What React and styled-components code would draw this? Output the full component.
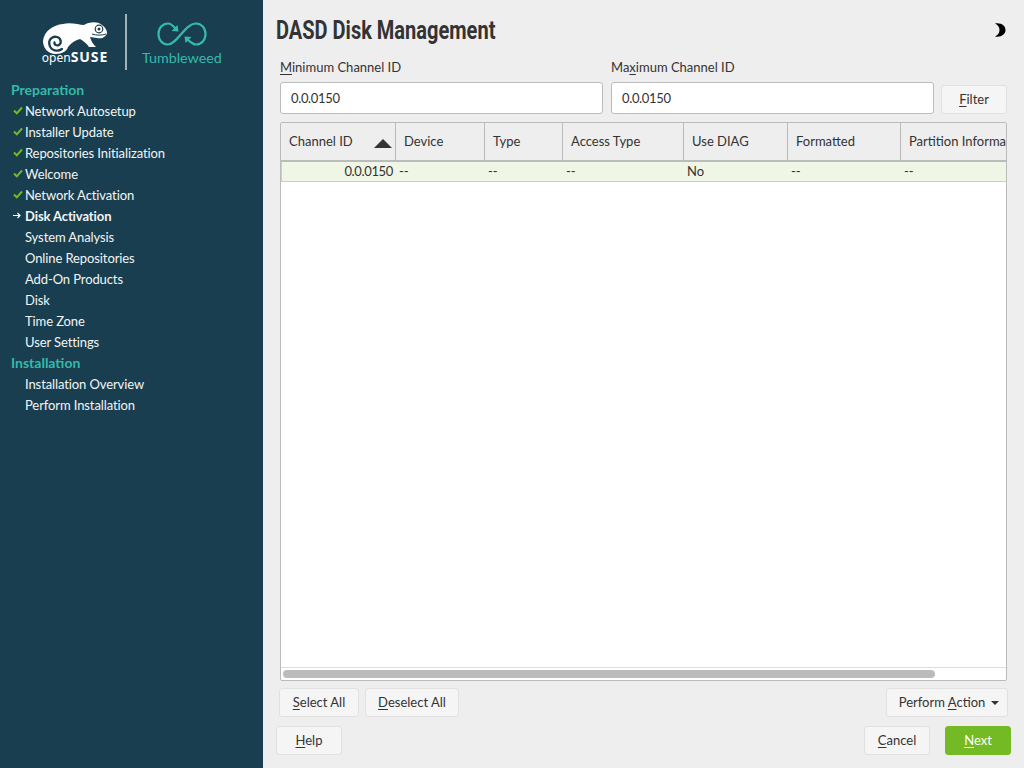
import styled, { createGlobalStyle } from "styled-components"

const steps = [
  { title: "Preparation" },
  { label: "Network Autosetup", state: "done" },
  { label: "Installer Update", state: "done" },
  { label: "Repositories Initialization", state: "done" },
  { label: "Welcome", state: "done" },
  { label: "Network Activation", state: "done" },
  { label: "Disk Activation", state: "current" },
  { label: "System Analysis" },
  { label: "Online Repositories" },
  { label: "Add-On Products" },
  { label: "Disk" },
  { label: "Time Zone" },
  { label: "User Settings" },
  { title: "Installation" },
  { label: "Installation Overview" },
  { label: "Perform Installation" },
]

const columns = [
  { name: "Channel ID", width: 115, sorted: true, value: "0.0.0150", right: true },
  { name: "Device", width: 89, value: "--" },
  { name: "Type", width: 78, value: "--" },
  { name: "Access Type", width: 121, value: "--" },
  { name: "Use DIAG", width: 104, value: "No" },
  { name: "Formatted", width: 113, value: "--" },
  { name: "Partition Information", width: 150, value: "--" },
]

export default function App() {
  return (
    <Page>
      <GlobalStyle />
      <Sidebar>
        <LogoBar>
          <Suse>
            <svg width="65" height="33" viewBox="0 0 65 33">
              <path fill="#fff" d="M0 20C1 10 10 4 20 3c8-2 16 1 21 1 5-3 13-4 18 0 3 2 5 5 5 8-1 4-5 6-10 5l-7-1c1 4 3 7 6 10h-7c-2-3-5-6-9-8-4 1-8 3-12 8-1 4-6 7-12 7C5 33 0 27 0 20z" />
              <path fill="none" stroke="#193e4f" strokeWidth="2.300" strokeLinecap="round" d="M19 28c-4 3-11 2-12.500-4C5 18 10 15 14 16c4 1 5 6 2 8-2 1-5 0-4.500-2.500" />
              <circle cx="56" cy="8" r="3.800" fill="none" stroke="#193e4f" strokeWidth="1.200" />
              <circle cx="56" cy="8" r="1.500" fill="#193e4f" />
              <path fill="none" stroke="#193e4f" strokeWidth="1" d="M49 13c4 1.500 10 1.500 14 0" />
            </svg>
            <SuseName>open<b>SUSE</b></SuseName>
          </Suse>
          <LogoRule />
          <Flavor>
            <svg width="50" height="24" viewBox="0 0 50 24">
              <path fill="none" stroke="#35b9ab" strokeWidth="2.200" d="M19 7C16 3.500 14 1.500 11 1.500 5.500 1.500 1.500 6 1.500 12s4 10.500 9.500 10.500c9 0 17-21 28-21 5.500 0 9.500 4.500 9.500 10.500s-4 10.500-9.500 10.500c-3 0-5-2-9-5.500" />
              <path fill="#35b9ab" d="M14.500 9l7 .5-1-6.500zM34.500 15l-7-.5 1 6.500z" />
            </svg>
            <FlavorName>Tumbleweed</FlavorName>
          </Flavor>
        </LogoBar>
        <nav>
          {steps.map((step) =>
            step.title ? (
              <StepTitle key={step.title}>{step.title}</StepTitle>
            ) : (
              <Step key={step.label} $current={step.state === "current"}>
                <StepMark>
                  {step.state === "done" && (
                    <svg width="10" height="9" viewBox="0 0 10 9">
                      <path fill="none" stroke="#73ba25" strokeWidth="2" d="M1 4.500l2.800 2.800L9 1.500" />
                    </svg>
                  )}
                  {step.state === "current" && (
                    <svg width="8" height="7" viewBox="0 0 8 7">
                      <path fill="none" stroke="#fff" strokeWidth="1.200" d="M0 3.500h6.500M4.500 1l2.500 2.500L4.500 6" />
                    </svg>
                  )}
                </StepMark>
                {step.label}
              </Step>
            )
          )}
        </nav>
      </Sidebar>
      <Main>
        <Header>
          <Title>DASD Disk Management</Title>
          <Moon>
            <svg width="12" height="14" viewBox="0 0 12 14">
              <path d="M1 .500c6-1 10.500 2 10.500 6.500S7 14.500 1 13.500C4 12 5.500 10 5.500 7S4 2 1 .500z" />
            </svg>
          </Moon>
        </Header>
        <Filters>
          <Field>
            <FieldLabel><u>M</u>inimum Channel ID</FieldLabel>
            <Input readOnly value="0.0.0150" />
          </Field>
          <Field>
            <FieldLabel>Ma<u>x</u>imum Channel ID</FieldLabel>
            <Input readOnly value="0.0.0150" />
          </Field>
          <FilterButton $width={66}><u>F</u>ilter</FilterButton>
        </Filters>
        <Table>
          <HeadRow>
            {columns.map((col) => (
              <HeadCell key={col.name} $width={col.width}>
                {col.name}
                {col.sorted && <SortArrow />}
              </HeadCell>
            ))}
          </HeadRow>
          <Row>
            {columns.map((col) => (
              <Cell key={col.name} $width={col.width} $right={col.right}>{col.value}</Cell>
            ))}
          </Row>
          <TableSpace />
          <ScrollTrack>
            <ScrollThumb />
          </ScrollTrack>
        </Table>
        <Actions>
          <ActionGroup>
            <Button $width={80}><u>S</u>elect All</Button>
            <Button $width={94}><u>D</u>eselect All</Button>
          </ActionGroup>
          <PerformButton $width={122}>
            Perform <u>A</u>ction
            <Caret />
          </PerformButton>
        </Actions>
        <Footer>
          <Button $width={66}><u>H</u>elp</Button>
          <FooterEnd>
            <Button $width={66}><u>C</u>ancel</Button>
            <Button $width={66} $primary><u>N</u>ext</Button>
          </FooterEnd>
        </Footer>
      </Main>
    </Page>
  )
}

const GlobalStyle = createGlobalStyle`
  html, body {
    margin: 0;
    padding: 0;
  }
  body {
    font-family: "Lato", "Noto Sans", sans-serif;
    font-size: 13px;
  }
  u {
    text-underline-offset: 2px;
  }
`

const Page = styled.div`
  width: 1024px;
  height: 768px;
  display: flex;
  overflow: hidden;
  background: #eeeeee;
  color: #333333;
`

const Sidebar = styled.aside`
  width: 263px;
  flex: none;
  background: #193e4f;
  color: #ffffff;
`

const LogoBar = styled.div`
  height: 80px;
  box-sizing: border-box;
  padding: 14px 0 0 41px;
  display: flex;
  align-items: flex-start;
`

const Suse = styled.div`
  width: 68px;
  padding-top: 7px;
  display: flex;
  flex-direction: column;
  align-items: center;
`

const SuseName = styled.div`
  font-size: 12px;
  line-height: 12px;
  margin-top: -3px;
  font-family: "Noto Sans", sans-serif;
  white-space: nowrap;
  b {
    font-size: 14px;
    letter-spacing: 0.9px;
  }
`

const LogoRule = styled.div`
  width: 2px;
  height: 56px;
  margin-left: 16px;
  background: #a3b1b8;
`

const Flavor = styled.div`
  margin-left: 15px;
  padding-top: 8px;
  display: flex;
  flex-direction: column;
  align-items: center;
  color: #35b9ab;
`

const FlavorName = styled.div`
  font-size: 14.300px;
  line-height: 18px;
  margin-top: 3px;
`

const StepTitle = styled.div`
  height: 21px;
  line-height: 19px;
  padding-left: 11px;
  font-weight: 700;
  font-size: 14px;
  color: #35b9ab;
`

const Step = styled.div`
  height: 21px;
  box-sizing: border-box;
  padding: 0 0 2px 13px;
  display: flex;
  align-items: center;
  font-size: 13px;
  letter-spacing: -0.1px;
  font-weight: ${(p) => (p.$current ? 700 : 400)};
  color: #f2f5f6;
`

const StepMark = styled.span`
  width: 12px;
  flex: none;
  display: flex;
  align-items: center;
`

const Main = styled.main`
  flex: 1;
  min-width: 0;
  display: flex;
  flex-direction: column;
  padding: 0 13px 13px 13px;
`

const Header = styled.header`
  height: 58px;
  flex: none;
  display: flex;
  align-items: center;
  justify-content: space-between;
  padding: 2px 5px 0 0;
  box-sizing: border-box;
`

const Title = styled.h1`
  margin: 0;
  font-family: "Roboto", sans-serif;
  font-size: 26px;
  font-weight: 700;
  color: #333333;
  transform: scaleX(0.77);
  transform-origin: left center;
  white-space: nowrap;
`

const Moon = styled.span`
  display: flex;
`

const Filters = styled.div`
  display: flex;
  align-items: flex-end;
  gap: 8px;
  margin: 0 4px 8px 4px;
`

const Field = styled.label`
  width: 323px;
  display: flex;
  flex-direction: column;
`

const FieldLabel = styled.span`
  height: 24px;
  line-height: 19px;
`

const Input = styled.input`
  height: 32px;
  box-sizing: border-box;
  border: 1px solid #bbbbbb;
  border-radius: 3px;
  background: #ffffff;
  padding: 0 10px;
  font: inherit;
  letter-spacing: -0.35px;
  color: #333333;
  outline: none;
`

const Button = styled.button`
  width: ${(p) => p.$width}px;
  height: 29px;
  box-sizing: border-box;
  padding: 0 0 2px;
  border: 1px solid ${(p) => (p.$primary ? "#73ba25" : "#e1e1e1")};
  border-radius: 3px;
  background: ${(p) => (p.$primary ? "#73ba25" : "#f5f5f5")};
  color: ${(p) => (p.$primary ? "#ffffff" : "#333333")};
  font: inherit;
`

const FilterButton = styled(Button)`
  flex: none;
  margin-left: -1px;
`

const PerformButton = styled(Button)`
  padding-left: 4px;
`

const Table = styled.div`
  flex: 1;
  min-height: 0;
  margin: 0 4px 7px 4px;
  border: 1px solid #bbbbbb;
  border-radius: 2px;
  background: #ffffff;
  display: flex;
  flex-direction: column;
  overflow: hidden;
`

const HeadRow = styled.div`
  height: 37px;
  flex: none;
  display: flex;
  background: #eeeeee;
  border-bottom: 2px solid #bbbbbb;
`

const HeadCell = styled.div`
  width: ${(p) => p.$width}px;
  flex: none;
  box-sizing: border-box;
  padding: 0 0 1px 8px;
  border-right: 1px solid #bbbbbb;
  display: flex;
  align-items: center;
  position: relative;
  white-space: nowrap;
  overflow: hidden;
`

const SortArrow = styled.span`
  position: absolute;
  right: 3px;
  top: 16px;
  width: 0;
  height: 0;
  border-left: 9.500px solid transparent;
  border-right: 9.500px solid transparent;
  border-bottom: 9px solid #333333;
`

const Row = styled.div`
  height: 19px;
  flex: none;
  display: flex;
  background: #eff6e5;
  border: solid #c6d3b9;
  border-width: 0 0 1px 1px;
`

const Cell = styled.div`
  width: ${(p) => p.$width}px;
  flex: none;
  box-sizing: border-box;
  padding: ${(p) => (p.$right ? "0 4px 0 0" : "0 0 0 2px")};
  text-align: ${(p) => (p.$right ? "right" : "left")};
  letter-spacing: ${(p) => (p.$right ? "-0.35px" : "0")};
  line-height: 18px;
`

const TableSpace = styled.div`
  flex: 1;
`

const ScrollTrack = styled.div`
  height: 13px;
  flex: none;
  box-sizing: border-box;
  padding: 2px;
  border-top: 1px solid #dddddd;
`

const ScrollThumb = styled.div`
  width: 652px;
  height: 8px;
  border-radius: 4px;
  background: #bbbbbb;
`

const Actions = styled.div`
  display: flex;
  justify-content: space-between;
  margin: 0 3px 9px 3px;
`

const ActionGroup = styled.div`
  display: flex;
  gap: 6px;
`

const Caret = styled.span`
  display: inline-block;
  margin-left: 6px;
  vertical-align: 2px;
  border-left: 4px solid transparent;
  border-right: 4px solid transparent;
  border-top: 4px solid #333333;
`

const Footer = styled.div`
  display: flex;
  justify-content: space-between;
`

const FooterEnd = styled.div`
  display: flex;
  gap: 15px;
`
